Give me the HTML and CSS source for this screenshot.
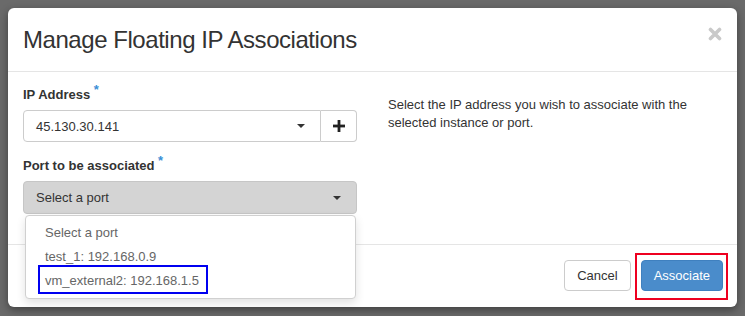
FILE: index.html
```html
<!DOCTYPE html>
<html lang="en">
<head>
  <meta charset="UTF-8">
  <title>Manage Floating IP Associations</title>
  <link rel="stylesheet" href="styles.css">
</head>
<body>

<div class="modal">
  <div class="modal-header">
    <h3>Manage Floating IP Associations</h3>
    <svg class="close" width="14" height="14" viewBox="0 0 14 14">
      <path d="M2.5 2.5 L11.5 11.5 M11.5 2.5 L2.5 11.5" stroke="#c9c9c9" stroke-width="3.6" stroke-linecap="round"/>
    </svg>
  </div>

  <div class="modal-body">
    <div class="col-left">
      <label>IP Address <span class="req">*</span></label>
      <div class="input-group">
        <div class="select-box">
          <span>45.130.30.141</span>
          <span class="caret"></span>
        </div>
        <div class="add-btn">
          <svg width="12" height="12" viewBox="0 0 12 12">
            <rect x="4.6" y="0" width="2.8" height="12" fill="#222"/>
            <rect x="0" y="4.6" width="12" height="2.8" fill="#222"/>
          </svg>
        </div>
      </div>

      <label>Port to be associated <span class="req">*</span></label>
      <div class="port-select">
        <div class="port-btn">
          <span>Select a port</span>
          <span class="caret"></span>
        </div>
        <ul class="dropdown">
          <li>Select a port</li>
          <li>test_1: 192.168.0.9</li>
          <li><span class="marked">vm_external2: 192.168.1.5</span></li>
        </ul>
      </div>
    </div>
    <div class="col-right">
      <p>Select the IP address you wish to associate with the selected instance or port.</p>
    </div>
  </div>

  <div class="modal-footer">
    <button class="btn">Cancel</button>
    <button class="btn btn-primary">Associate</button>
  </div>
</div>

</body>
</html>
```

FILE: styles.css
```css
body {
  margin: 0;
  padding: 8px 8px 0 8px;
  background-color: #6a6a6a;
  font-family: "Liberation Sans", Arial, sans-serif;
  font-size: 13px;
  color: #333;
  height: 316px;
  box-sizing: border-box;
  overflow: hidden;
}
.modal {
  width: 729px;
  background-color: #fff;
  border-radius: 6px;
  box-shadow: 0 3px 9px rgba(0, 0, 0, 0.4);
}
.modal-header {
  height: 64px;
  border-bottom: 1px solid #e5e5e5;
  display: flex;
  align-items: center;
  justify-content: space-between;
  padding: 0 15px 0 15px;
  box-sizing: border-box;
}
.modal-header h3 {
  margin: 0;
  font-size: 24px;
  letter-spacing: -0.45px;
  font-weight: normal;
  color: #333;
}
.close {
  margin-top: -12px;
}
.modal-body {
  height: 172px;
  box-sizing: border-box;
  padding: 14px 15px 0 15px;
  display: flex;
  gap: 31px;
}
.col-left {
  width: 334px;
}
.col-right {
  flex: 1;
  padding-top: 10px;
}
.col-right p {
  margin: 0;
  line-height: 18px;
  color: #333;
  width: 320px;
}
label {
  display: block;
  font-weight: bold;
  margin-bottom: 6px;
  line-height: 18px;
}
.req {
  position: relative;
  top: -5px;
  color: #3b8fd6;
  font-size: 13px;
}
.input-group {
  display: flex;
  height: 32px;
  margin-bottom: 15px;
}
.select-box {
  flex: 1;
  display: flex;
  align-items: center;
  justify-content: space-between;
  padding: 0 15px 0 12px;
  border: 1px solid #ccc;
  border-radius: 4px 0 0 4px;
}
.add-btn {
  width: 35px;
  display: flex;
  align-items: center;
  justify-content: center;
  border: 1px solid #ccc;
  border-left: none;
  border-radius: 0 4px 4px 0;
}
.caret {
  width: 0;
  height: 0;
  border-left: 4px solid transparent;
  border-right: 4px solid transparent;
  border-top: 4px solid #333;
}
.port-select {
  position: relative;
}
.port-btn {
  height: 33px;
  display: flex;
  align-items: center;
  justify-content: space-between;
  padding: 0 15px 0 12px;
  background-color: #d4d4d4;
  border: 1px solid #c6c6c6;
  border-radius: 4px;
  box-sizing: border-box;
}
.dropdown {
  position: absolute;
  top: 34px;
  left: 2px;
  width: 331px;
  box-sizing: border-box;
  margin: 0;
  padding: 5px 0;
  list-style: none;
  background-color: #fff;
  border: 1px solid #d0d0d0;
  border-radius: 4px;
  box-shadow: 0 4px 10px rgba(0, 0, 0, 0.12);
  z-index: 2;
}
.dropdown li {
  line-height: 24px;
  padding-left: 19px;
  color: #666;
}
.marked {
  position: relative;
}
.marked::after {
  content: "";
  position: absolute;
  left: -7px;
  right: -9px;
  top: -8px;
  bottom: -6px;
  border: 2px solid #0000f0;
}
.modal-footer {
  height: 63px;
  border-top: 1px solid #e5e5e5;
  box-sizing: border-box;
  display: flex;
  justify-content: flex-end;
  align-items: flex-start;
  gap: 10px;
  padding: 15px 14px 0 0;
}
.btn {
  height: 31px;
  padding: 0 12px;
  font-family: "Liberation Sans", Arial, sans-serif;
  font-size: 13px;
  color: #333;
  background-color: #fff;
  border: 1px solid #ccc;
  border-radius: 4px;
}
.btn-primary {
  position: relative;
  color: #fff;
  background-color: #4a8ccb;
  border-color: #3f80bf;
}
.btn-primary::after {
  content: "";
  position: absolute;
  left: -7px;
  right: -6px;
  top: -8px;
  bottom: -10px;
  border: 2px solid #ee0020;
}
```
